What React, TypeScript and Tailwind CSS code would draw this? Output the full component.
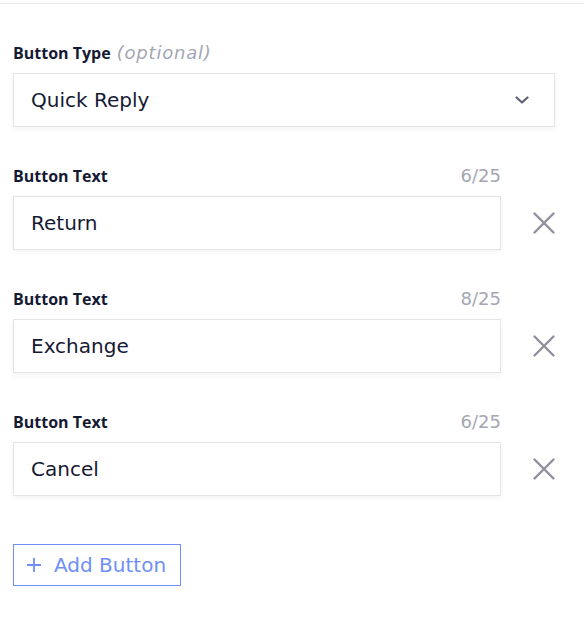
const buttons = [
  { text: 'Return', count: '6/25' },
  { text: 'Exchange', count: '8/25' },
  { text: 'Cancel', count: '6/25' },
];

const font = { fontFamily: '"DejaVu Sans", "Noto Sans", sans-serif' };
const labelFont = { fontFamily: '"Open Sans", "Noto Sans", sans-serif' };

function Chevron() {
  return (
    <svg width="14" height="8" viewBox="0 0 14 8" fill="none" className="text-[#5f6275]">
      <polyline points="1.5,1.5 7,6.5 12.5,1.5" stroke="currentColor" strokeWidth="2.2" strokeLinecap="round" strokeLinejoin="round" />
    </svg>
  );
}

function Cross() {
  return (
    <svg width="22" height="22" viewBox="0 0 22 22" fill="none" className="text-[#8e909c]">
      <path d="M1.5 1.5 L20.5 20.5 M20.5 1.5 L1.5 20.5" stroke="currentColor" strokeWidth="2.4" strokeLinecap="round" />
    </svg>
  );
}

function PlusIcon() {
  return (
    <svg width="16" height="16" viewBox="0 0 16 16" fill="none">
      <path d="M8 1 V15 M1 8 H15" stroke="currentColor" strokeWidth="1.8" />
    </svg>
  );
}

export default function App() {
  return (
    <div className="w-[584px] h-[628px] bg-white text-[#151a33]" style={font}>
      <div className="h-[3px]" />
      <div className="border-t border-[#ececf0]" />

      <div className="px-[13px] pt-[37px]">
        {/* Button type */}
        <div className="h-6 flex items-center leading-6">
          <span className="font-bold text-[16px]" style={labelFont}>Button Type</span>
          <span className="ml-[6px] italic text-[#a4a6b3] text-[18px] tracking-[0.8px]">(optional)</span>
        </div>
        <div className="mt-2 w-[542px] h-[54px] border border-[#e4e4e8] bg-white shadow-[0_2px_6px_rgba(0,0,0,0.05)] flex items-center justify-between pl-[17px] pr-[25px]">
          <span className="text-[20px]">Quick Reply</span>
          <Chevron />
        </div>

        {/* Button texts */}
        {buttons.map((b) => (
          <div key={b.text} className="mt-[37px]">
            <div className="w-[488px] h-6 flex items-center justify-between leading-6">
              <span className="font-bold text-[16px]" style={labelFont}>Button Text</span>
              <span className="text-[#a4a6b3] text-[18px]">{b.count}</span>
            </div>
            <div className="mt-2 flex items-center">
              <div className="w-[488px] h-[54px] border border-[#e4e4e8] bg-white shadow-[0_2px_6px_rgba(0,0,0,0.05)] flex items-center pl-[17px]">
                <span className="text-[20px]">{b.text}</span>
              </div>
              <div className="ml-8">
                <Cross />
              </div>
            </div>
          </div>
        ))}

        {/* Add button */}
        <div className="mt-12 w-[168px] h-[42px] border border-[#6f8ff7] flex items-center pl-3 gap-3 text-[#6f8ff7]">
          <PlusIcon />
          <span className="text-[20px]">Add Button</span>
        </div>
      </div>
    </div>
  );
}
